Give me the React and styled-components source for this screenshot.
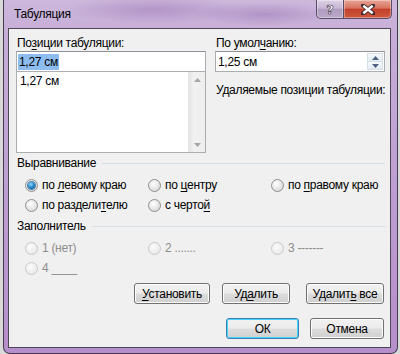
import React from "react";
import styled, { createGlobalStyle } from "styled-components";

const GlobalStyle = createGlobalStyle`
  html, body {
    margin: 0;
    padding: 0;
    background: #d9d9d9;
    overflow: hidden;
  }
  body {
    font-family: "Liberation Sans", Arial, sans-serif;
    font-size: 12px;
    letter-spacing: -0.3px;
    color: #000;
  }
`;

const Window = styled.div`
  box-sizing: border-box;
  width: 395px;
  height: 354px;
  margin-left: 3px;
  display: flex;
  flex-direction: column;
  padding: 0 6px 5px 4px;
  border: 1px solid #463a52;
  border-top: 0;
  border-radius: 0 0 7px 7px;
  background:
    radial-gradient(ellipse 90px 14px at 150px 10px, rgba(150, 110, 175, 0.45), transparent),
    radial-gradient(ellipse 70px 12px at 260px 14px, rgba(140, 100, 170, 0.4), transparent),
    linear-gradient(180deg, #cdb8dc 0%, #c6add7 10%, #b58fca 100%);
`;

const TitleBar = styled.div`
  height: 28px;
  flex: none;
  display: flex;
  align-items: flex-start;
  justify-content: space-between;
`;

const Title = styled.div`
  margin: 7px 0 0 6px;
  line-height: 15px;
  color: #000;
`;

const Caption = styled.div`
  display: flex;
  margin-right: -1px;
`;

const CaptionButton = styled.div`
  box-sizing: border-box;
  width: ${(p) => (p.$close ? 48 : 28)}px;
  height: 19px;
  display: flex;
  align-items: center;
  justify-content: center;
  border: 1px solid #5a4b66;
  border-top: 0;
  border-left: ${(p) => (p.$close ? 0 : "1px solid #5a4b66")};
  border-radius: ${(p) => (p.$close ? "0 0 5px 0" : "0 0 0 5px")};
  box-shadow: inset 0 0 0 1px rgba(255, 255, 255, 0.35);
  background: ${(p) =>
    p.$close
      ? "linear-gradient(180deg, #e7a597 0%, #d8735f 45%, #c4402b 52%, #cf5a40 100%)"
      : "linear-gradient(180deg, #ddd0e6 0%, #c8b8d4 45%, #b09dbf 52%, #bba9c9 100%)"};
`;

const HelpGlyph = styled.span`
  font-family: "DejaVu Sans", sans-serif;
  font-weight: bold;
  font-size: 13px;
  line-height: 13px;
  letter-spacing: 0;
  color: #fff;
  -webkit-text-stroke: 0.6px #3a3048;
`;

const Panel = styled.div`
  flex: 1;
  box-sizing: border-box;
  display: flex;
  flex-direction: column;
  padding: 7px 5px 8px 7px;
  border: 1px solid #4f4759;
  background: #f0f0f0;
`;

const TopSection = styled.div`
  display: grid;
  grid-template-columns: 190px 170px;
  column-gap: 9px;
`;

const Column = styled.div`
  display: flex;
  flex-direction: column;
`;

const Label = styled.div`
  line-height: 15px;
  padding-left: 1px;
  margin-top: ${(p) => p.$gap || 0}px;
  white-space: nowrap;
`;

const U = styled.span`
  text-decoration: underline;
  text-underline-offset: 2px;
`;

const TextBox = styled.div`
  box-sizing: border-box;
  height: 21px;
  display: flex;
  align-items: center;
  padding-left: 1px;
  border: 1px solid #abadb3;
  border-top-color: #8e9197;
  background: #fff;
  position: relative;
`;

const Selected = styled.span`
  background: #8dbdf0;
  line-height: 16px;
  padding: 0 1px;
`;

const Value = styled.span`
  padding-left: 1px;
  line-height: 16px;
`;

const ListBox = styled.div`
  box-sizing: border-box;
  height: 81px;
  display: flex;
  border: 1px solid #abadb3;
  border-top: 0;
  background: #fff;
`;

const ListItems = styled.div`
  flex: 1;
  padding: 2px 0 0 3px;
  line-height: 15px;
`;

const ScrollTrack = styled.div`
  width: 17px;
  display: flex;
  flex-direction: column;
  justify-content: space-between;
  align-items: center;
  padding: 6px 0 5px;
  box-sizing: border-box;
  background: linear-gradient(90deg, #e3e3e3, #f2f2f2 30%, #eeeeee);
  border-left: 1px solid #e6e6e6;
`;

const SpinButtons = styled.div`
  position: absolute;
  right: 1px;
  top: 1px;
  bottom: 1px;
  width: 16px;
  display: flex;
  flex-direction: column;
`;

const SpinButton = styled.div`
  flex: 1;
  display: flex;
  align-items: center;
  justify-content: center;
  background: linear-gradient(180deg, #f6f9fc, #e3ebf3);
  border: 1px solid #d6dee8;
  & + & {
    border-top: 0;
  }
`;

const Group = styled.div`
  display: flex;
  align-items: center;
  line-height: 15px;
  margin-top: ${(p) => p.$gap}px;
  padding-left: 1px;
`;

const GroupLine = styled.div`
  flex: 1;
  height: 1px;
  margin-left: 6px;
  background: #d5dfe5;
`;

const RadioGrid = styled.div`
  display: grid;
  grid-template-columns: 123px 123px auto;
  grid-auto-rows: 20px;
  padding-left: 9px;
  margin-top: 4px;
`;

const RadioItem = styled.div`
  display: flex;
  align-items: center;
  grid-column: ${(p) => p.$col};
  color: ${(p) => (p.$disabled ? "#8d8d8d" : "#000")};
  white-space: nowrap;
`;

const RadioCircle = styled.span`
  box-sizing: border-box;
  width: 13px;
  height: 13px;
  border-radius: 50%;
  margin-right: 4px;
  flex: none;
  display: flex;
  align-items: center;
  justify-content: center;
  border: 1px solid ${(p) => (p.$disabled ? "#c9c9c9" : "#8e8f8f")};
  background: ${(p) =>
    p.$disabled
      ? "radial-gradient(circle at 40% 35%, #fbfbfb, #e4e4e4)"
      : "radial-gradient(circle at 40% 35%, #ffffff, #d9d9d9 80%, #c9c9c9)"};
`;

const RadioDot = styled.span`
  width: 7px;
  height: 7px;
  border-radius: 50%;
  background: radial-gradient(circle at 40% 35%, #8fdcff, #1b7bbd 55%, #0b4a7c);
  box-shadow: 0 0 0 1px #4a7fa6;
`;

const ButtonRow = styled.div`
  display: flex;
  justify-content: flex-end;
  margin-top: ${(p) => p.$gap}px;
  padding-right: 1px;
`;

const Button = styled.div`
  box-sizing: border-box;
  width: ${(p) => p.$w}px;
  height: 21px;
  margin-left: ${(p) => p.$ml || 0}px;
  display: flex;
  align-items: center;
  justify-content: center;
  border: 1px solid ${(p) => (p.$focused ? "#3c7fb1" : "#707070")};
  border-radius: 3px;
  box-shadow: inset 0 0 0 1px ${(p) => (p.$focused ? "#48d5fb" : "#fcfcfc")};
  background: linear-gradient(180deg, #f2f2f2 0%, #ebebeb 49%, #dddddd 51%, #cfcfcf 100%);
  white-space: nowrap;
`;

function Radio({ col, checked, disabled, children }) {
  return (
    <RadioItem $col={col} $disabled={disabled}>
      <RadioCircle $disabled={disabled}>{checked && <RadioDot />}</RadioCircle>
      <span>{children}</span>
    </RadioItem>
  );
}

function Arrow({ up, color = "#8b8b8b", w = 7 }) {
  return (
    <svg width={w} height="4" viewBox="0 0 7 4">
      <path d={up ? "M0 4 L3.5 0 L7 4 Z" : "M0 0 L3.5 4 L7 0 Z"} fill={color} />
    </svg>
  );
}

function CloseGlyph() {
  return (
    <svg width="14" height="11" viewBox="0 0 14 11">
      <path d="M2 1.5 L12 9.5 M12 1.5 L2 9.5" stroke="#3b2b33" strokeWidth="4.2" strokeLinecap="square" />
      <path d="M2.3 1.8 L11.7 9.2 M11.7 1.8 L2.3 9.2" stroke="#fff" strokeWidth="2.4" />
    </svg>
  );
}

export default function App() {
  return (
    <>
      <GlobalStyle />
      <Window>
        <TitleBar>
          <Title>Табуляция</Title>
          <Caption>
            <CaptionButton>
              <HelpGlyph>?</HelpGlyph>
            </CaptionButton>
            <CaptionButton $close>
              <CloseGlyph />
            </CaptionButton>
          </Caption>
        </TitleBar>
        <Panel>
          <TopSection>
            <Column>
              <Label>
                По<U>з</U>иции табуляции:
              </Label>
              <TextBox>
                <Selected>1,27 см</Selected>
              </TextBox>
              <ListBox>
                <ListItems>1,27 см</ListItems>
                <ScrollTrack>
                  <Arrow up color="#a6a6a6" />
                  <Arrow color="#a6a6a6" />
                </ScrollTrack>
              </ListBox>
            </Column>
            <Column>
              <Label>
                По умол<U>ч</U>анию:
              </Label>
              <TextBox>
                <Value>1,25 см</Value>
                <SpinButtons>
                  <SpinButton>
                    <Arrow up color="#4d6185" />
                  </SpinButton>
                  <SpinButton>
                    <Arrow color="#4d6185" />
                  </SpinButton>
                </SpinButtons>
              </TextBox>
              <Label $gap={11}>Удаляемые позиции табуляции:</Label>
            </Column>
          </TopSection>

          <Group $gap={3}>
            <span>Выравнивание</span>
            <GroupLine />
          </Group>
          <RadioGrid>
            <Radio col={1} checked>
              по <U>л</U>евому краю
            </Radio>
            <Radio col={2}>
              по <U>ц</U>ентру
            </Radio>
            <Radio col={3}>
              по <U>п</U>равому краю
            </Radio>
            <Radio col={1}>
              по раздели<U>т</U>елю
            </Radio>
            <Radio col={2}>
              с черто<U>й</U>
            </Radio>
          </RadioGrid>

          <Group $gap={4}>
            <span>Заполнитель</span>
            <GroupLine />
          </Group>
          <RadioGrid>
            <Radio col={1} disabled>
              1 (нет)
            </Radio>
            <Radio col={2} disabled>
              2 .......
            </Radio>
            <Radio col={3} disabled>
              3 -------
            </Radio>
            <Radio col={1} disabled>
              4 ____
            </Radio>
          </RadioGrid>

          <ButtonRow $gap={5}>
            <Button $w={76}>
              <span>
                <U>У</U>становить
              </span>
            </Button>
            <Button $w={68} $ml={12}>
              <span>
                Уд<U>а</U>лить
              </span>
            </Button>
            <Button $w={78} $ml={16}>
              <span>
                Удалит<U>ь</U> все
              </span>
            </Button>
          </ButtonRow>
          <ButtonRow $gap={14}>
            <Button $w={73} $focused>
              <span>ОК</span>
            </Button>
            <Button $w={74} $ml={11}>
              <span>Отмена</span>
            </Button>
          </ButtonRow>
        </Panel>
      </Window>
    </>
  );
}
